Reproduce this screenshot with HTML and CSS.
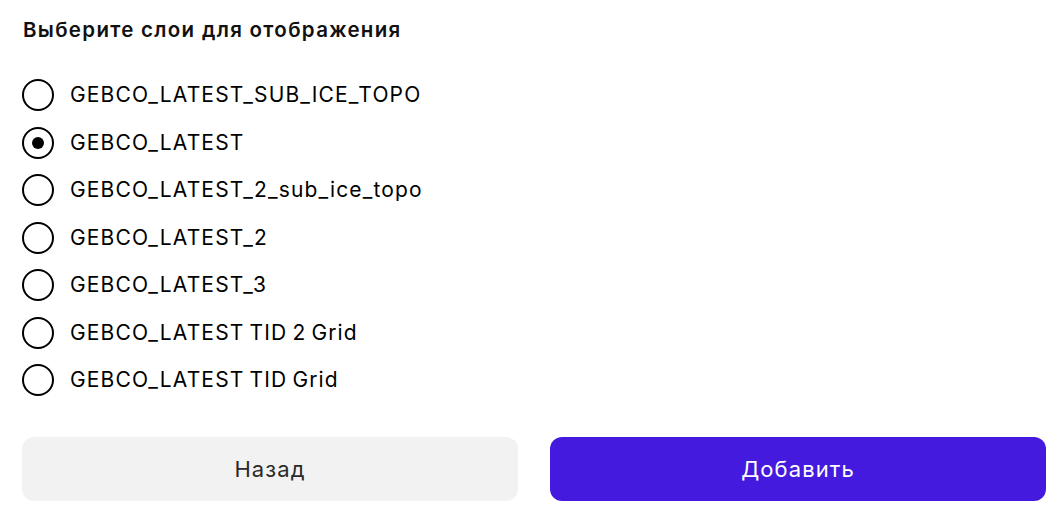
FILE: index.html
```html
<!DOCTYPE html>
<html lang="ru">
<head>
<meta charset="utf-8">
<link rel="stylesheet" href="styles.css">
</head>
<body>
<div class="dialog">
  <h2 class="title">Выберите слои для отображения</h2>
  <div class="list">
    <label class="row"><span class="radio"></span><span class="label">GEBCO_LATEST_SUB_ICE_TOPO</span></label>
    <label class="row"><span class="radio checked"></span><span class="label">GEBCO_LATEST</span></label>
    <label class="row"><span class="radio"></span><span class="label">GEBCO_LATEST_2_sub_ice_topo</span></label>
    <label class="row"><span class="radio"></span><span class="label">GEBCO_LATEST_2</span></label>
    <label class="row"><span class="radio"></span><span class="label">GEBCO_LATEST_3</span></label>
    <label class="row"><span class="radio"></span><span class="label">GEBCO_LATEST TID 2 Grid</span></label>
    <label class="row"><span class="radio"></span><span class="label">GEBCO_LATEST TID Grid</span></label>
  </div>
  <div class="actions">
    <button class="btn btn-back">Назад</button>
    <button class="btn btn-add">Добавить</button>
  </div>
</div>
</body>
</html>
```
FILE: styles.css
```css
html, body {
  margin: 0;
  padding: 0;
  background: #ffffff;
}
body {
  font-family: "Inter", "Liberation Sans", sans-serif;
  color: #000;
}
.dialog {
  padding: 16px 18px 0 22px;
  display: flex;
  flex-direction: column;
}
.title {
  margin: 0;
  font-size: 20.5px;
  line-height: 28px;
  font-weight: 600;
  letter-spacing: 1.3px;
  color: #111;
  padding-left: 1px;
}
.list {
  margin-top: 35px;
  display: flex;
  flex-direction: column;
  gap: 15.5px;
}
.row {
  display: flex;
  align-items: center;
  gap: 16px;
  height: 32px;
}
.radio {
  box-sizing: border-box;
  width: 32px;
  height: 32px;
  border: 2px solid #000;
  border-radius: 50%;
  display: flex;
  align-items: center;
  justify-content: center;
  flex: none;
}
.radio.checked::after {
  content: "";
  width: 12px;
  height: 12px;
  border-radius: 50%;
  background: #000;
}
.label {
  font-size: 21px;
  line-height: 28px;
  letter-spacing: 1.15px;
  word-spacing: -2px;
  color: #000;
}
.actions {
  margin-top: 41px;
  display: grid;
  grid-template-columns: 1fr 1fr;
  gap: 32px;
}
.btn {
  height: 64px;
  border: none;
  border-radius: 12px;
  font-family: inherit;
  font-size: 22px;
  letter-spacing: 1.1px;
}
.btn-back {
  background: #f2f2f2;
  color: #2a2a2a;
}
.btn-add {
  background: #441bde;
  color: #fff;
}
```
